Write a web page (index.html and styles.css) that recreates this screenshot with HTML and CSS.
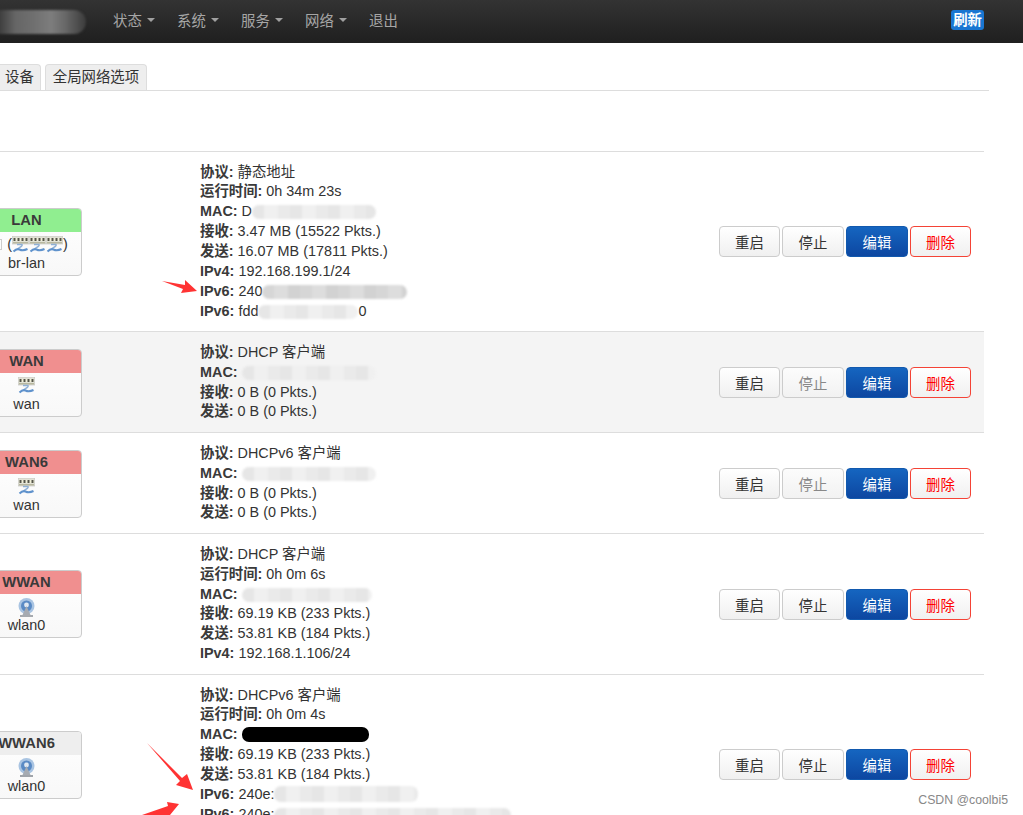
FILE: index.html
```html
<!DOCTYPE html>
<html>
<head>
<meta charset="utf-8">
<title>接口 - LuCI</title>
<link rel="stylesheet" href="styles.css">
</head>
<body>
<svg class="defs">
  <symbol id="port" viewBox="0 0 17 17">
    <rect x="0" y="0" width="17" height="8" fill="#e2e2d6" stroke="#bbb" stroke-width="0.6"/>
    <rect x="1" y="2" width="15" height="3" fill="#f0efd8"/>
    <path d="M2.500 2v3M6.500 2v3M10.500 2v3M14.500 2v3" stroke="#55554a" stroke-width="2"/>
    <rect x="1" y="6" width="15" height="1.500" fill="#b8b8a0"/>
    <path d="M5 8.500h5c1 1.500-2 2.500-4 4" fill="none" stroke="#8fb0d4" stroke-width="1.400"/>
    <path d="M1.500 15.500c2-2 4-3 6-2c2 1 5 1 8-.500" fill="none" stroke="#5f92cc" stroke-width="2"/>
  </symbol>
  <symbol id="wifi" viewBox="0 0 17 19">
    <circle cx="8.500" cy="8" r="8" fill="#a9c4e2"/>
    <circle cx="8.500" cy="8" r="5.500" fill="#5a8ac4"/>
    <circle cx="8.500" cy="7" r="2.400" fill="#dfe8f2"/>
    <path d="M8.500 8L4.500 17h8z" fill="#a6abb2"/>
    <path d="M2 18h13" stroke="#8a8f96" stroke-width="1.600"/>
  </symbol>
</svg>

<div class="navbar">
  <div class="brand"></div>
  <div class="menu">
    <a class="menu-item">状态<i class="caret"></i></a>
    <a class="menu-item">系统<i class="caret"></i></a>
    <a class="menu-item">服务<i class="caret"></i></a>
    <a class="menu-item">网络<i class="caret"></i></a>
    <a class="menu-item">退出</a>
  </div>
  <span class="refresh">刷新</span>
</div>

<div class="tabs">
  <span class="tab tab-first">设备</span>
  <span class="tab">全局网络选项</span>
</div>

<div class="table">

  <div class="row">
    <div class="card-cell">
      <div class="card">
        <div class="card-head green">LAN</div>
        <div class="card-body">
          <div class="icons icons-bridge"><i class="stub"></i>(<svg class="ico"><use href="#port"/></svg><svg class="ico"><use href="#port"/></svg><svg class="ico"><use href="#port"/></svg>)</div>
          <div>br-lan</div>
        </div>
      </div>
    </div>
    <div class="info">
      <div><b>协议:</b> 静态地址</div>
      <div><b>运行时间:</b> 0h 34m 23s</div>
      <div><b>MAC:</b> D<span class="mask mask-lan-mac"></span></div>
      <div><b>接收:</b> 3.47 MB (15522 Pkts.)</div>
      <div><b>发送:</b> 16.07 MB (17811 Pkts.)</div>
      <div><b>IPv4:</b> 192.168.199.1/24</div>
      <div><b>IPv6:</b> 240<span class="mask mask-lan-ip"></span></div>
      <div><b>IPv6:</b> fdd<span class="mask mask-lan-ula"></span>0</div>
    </div>
    <div class="actions">
      <button class="btn">重启</button><button class="btn">停止</button><button class="btn btn-edit">编辑</button><button class="btn btn-del">删除</button>
    </div>
  </div>

  <div class="row shaded">
    <div class="card-cell">
      <div class="card">
        <div class="card-head red">WAN</div>
        <div class="card-body">
          <div class="icons"><svg class="ico"><use href="#port"/></svg></div>
          <div>wan</div>
        </div>
      </div>
    </div>
    <div class="info">
      <div><b>协议:</b> DHCP 客户端</div>
      <div><b>MAC:</b> <span class="mask mask-wan"></span></div>
      <div><b>接收:</b> 0 B (0 Pkts.)</div>
      <div><b>发送:</b> 0 B (0 Pkts.)</div>
    </div>
    <div class="actions">
      <button class="btn">重启</button><button class="btn btn-off">停止</button><button class="btn btn-edit">编辑</button><button class="btn btn-del">删除</button>
    </div>
  </div>

  <div class="row">
    <div class="card-cell">
      <div class="card">
        <div class="card-head red">WAN6</div>
        <div class="card-body">
          <div class="icons"><svg class="ico"><use href="#port"/></svg></div>
          <div>wan</div>
        </div>
      </div>
    </div>
    <div class="info">
      <div><b>协议:</b> DHCPv6 客户端</div>
      <div><b>MAC:</b> <span class="mask mask-wan"></span></div>
      <div><b>接收:</b> 0 B (0 Pkts.)</div>
      <div><b>发送:</b> 0 B (0 Pkts.)</div>
    </div>
    <div class="actions">
      <button class="btn">重启</button><button class="btn btn-off">停止</button><button class="btn btn-edit">编辑</button><button class="btn btn-del">删除</button>
    </div>
  </div>

  <div class="row">
    <div class="card-cell">
      <div class="card">
        <div class="card-head red">WWAN</div>
        <div class="card-body">
          <div class="icons"><svg class="ico ico-wifi"><use href="#wifi"/></svg></div>
          <div>wlan0</div>
        </div>
      </div>
    </div>
    <div class="info">
      <div><b>协议:</b> DHCP 客户端</div>
      <div><b>运行时间:</b> 0h 0m 6s</div>
      <div><b>MAC:</b> <span class="mask mask-wwan"></span></div>
      <div><b>接收:</b> 69.19 KB (233 Pkts.)</div>
      <div><b>发送:</b> 53.81 KB (184 Pkts.)</div>
      <div><b>IPv4:</b> 192.168.1.106/24</div>
    </div>
    <div class="actions">
      <button class="btn">重启</button><button class="btn">停止</button><button class="btn btn-edit">编辑</button><button class="btn btn-del">删除</button>
    </div>
  </div>

  <div class="row">
    <div class="card-cell">
      <div class="card">
        <div class="card-head grey">WWAN6</div>
        <div class="card-body">
          <div class="icons"><svg class="ico ico-wifi"><use href="#wifi"/></svg></div>
          <div>wlan0</div>
        </div>
      </div>
    </div>
    <div class="info">
      <div><b>协议:</b> DHCPv6 客户端</div>
      <div><b>运行时间:</b> 0h 0m 4s</div>
      <div><b>MAC:</b> <span class="mask mask-black"></span></div>
      <div><b>接收:</b> 69.19 KB (233 Pkts.)</div>
      <div><b>发送:</b> 53.81 KB (184 Pkts.)</div>
      <div><b>IPv6:</b> 240e:<span class="mask mask-wwan-ip"></span></div>
      <div><b>IPv6:</b> 240e:<span class="mask mask-wwan-ip2"></span></div>
      <div>&nbsp;</div>
    </div>
    <div class="actions">
      <button class="btn">重启</button><button class="btn">停止</button><button class="btn btn-edit">编辑</button><button class="btn btn-del">删除</button>
    </div>
  </div>

</div>

<!-- red arrows pasted on top of the screenshot -->
<svg class="arrows" viewBox="0 0 1023 815">
  <polygon points="162,281 185,285 185,280 197,291 181,293 183,289"/>
  <polygon points="147,743 182,778 187,774 193,790 176,785 180,781"/>
  <polygon points="142,815 168,806 167,802 179,804 170,815"/>
</svg>

<div class="watermark">CSDN @coolbi5</div>
</body>
</html>
```

FILE: styles.css
```css
html, body {
  height: 815px;
  overflow: hidden;
}
body {
  position: relative;
  margin: 0;
  background: #fff;
  color: #333;
  font-family: "Liberation Sans", "Noto Sans CJK SC", sans-serif;
  font-size: 14.4px;
}
.defs {
  display: none;
}

.navbar {
  display: flex;
  align-items: center;
  height: 43px;
  box-sizing: border-box;
  padding-right: 39px;
  padding-bottom: 4px;
  background: linear-gradient(#333, #1f1f1f);
}
.brand {
  width: 88px;
  height: 24px;
  margin-top: 4px;
  margin-left: -2px;
  border-radius: 0 12px 12px 0;
  background: linear-gradient(90deg, #3a3a3a, #666 20%, #6f6f6f 40%, #7d7d7d 60%, #6a6a6a 75%, #3c3c3c);
  filter: blur(1px);
}
.menu {
  display: flex;
  margin-left: 27px;
  flex: 1;
}
.menu-item {
  display: flex;
  align-items: center;
  width: 64px;
  color: #a6a6a6;
}
.caret {
  width: 0;
  height: 0;
  margin-left: 5px;
  border-top: 4px solid #a0a0a0;
  border-left: 4px solid transparent;
  border-right: 4px solid transparent;
}
.refresh {
  padding: 0 2px;
  height: 20px;
  line-height: 20px;
  border-radius: 3px;
  background: #1976d2;
  color: #fff;
  font-weight: bold;
}

.tabs {
  display: flex;
  gap: 4px;
  width: 989px;
  height: 26px;
  margin-top: 21px;
  border-bottom: 1px solid #ddd;
}
.tab {
  height: 26px;
  padding: 0 7px;
  line-height: 25px;
  border: 1px solid #ddd;
  border-bottom: 0;
  border-radius: 4px 4px 0 0;
  background: #eee;
  box-sizing: border-box;
}
.tab-first {
  margin-left: -7px;
  padding-left: 11px;
  padding-right: 6px;
}

.table {
  width: 984px;
  margin-top: 60px;
}
.row {
  display: grid;
  grid-template-columns: 200px 1fr auto;
  align-items: center;
  padding: 10.600px 13px 10px 0;
  border-top: 1px solid #ddd;
}
.shaded {
  background: #f4f4f4;
}

.card {
  width: 111px;
  margin-left: -29px;
  box-sizing: border-box;
  border: 1px solid #ccc;
  border-radius: 4px;
  background: linear-gradient(#fff, #f8f8f8);
  text-align: center;
  overflow: hidden;
}
.card-head {
  height: 23px;
  line-height: 23px;
  font-weight: bold;
  font-size: 14.800px;
  color: #3a3a3a;
}
.green {
  background: #90ee90;
}
.red {
  background: #f08f8f;
}
.grey {
  background: #eee;
}
.card-body {
  height: 43px;
  padding-top: 3px;
  line-height: 15px;
  box-sizing: border-box;
}
.icons {
  display: flex;
  justify-content: center;
  align-items: center;
  position: relative;
  height: 20px;
  margin-bottom: 1px;
}
.icons-bridge {
  padding-left: 22px;
}
.ico {
  width: 17px;
  height: 17px;
}
.ico-wifi {
  height: 19px;
}
.stub {
  position: absolute;
  left: 20px;
  top: 4px;
  width: 8px;
  height: 9px;
  border: 1px solid #ccc;
}

.info {
  line-height: 19.850px;
  white-space: nowrap;
}
.info b {
  color: #3a3a3a;
}

.mask {
  display: inline-block;
  height: 14px;
  vertical-align: -3px;
  border-radius: 7px;
  filter: blur(1px);
  background: repeating-linear-gradient(90deg, #e6e6e6 0 12px, #f0f0f0 12px 26px, #eaeaea 26px 38px);
}
.mask-lan-mac {
  width: 124px;
}
.mask-lan-ip {
  width: 145px;
  background: repeating-linear-gradient(90deg, #d6d6d6 0 12px, #ddd 12px 26px, #d2d2d2 26px 38px);
}
.mask-lan-ula {
  width: 100px;
}
.mask-wan {
  width: 134px;
}
.mask-wwan {
  width: 130px;
}
.mask-black {
  width: 127px;
  height: 15px;
  background: #000;
  filter: none;
}
.mask-wwan-ip {
  width: 144px;
  height: 16px;
}
.mask-wwan-ip2 {
  width: 237px;
}

.actions {
  display: flex;
  gap: 2px;
}
.btn {
  width: 62px;
  height: 31px;
  padding: 0;
  border: 1px solid #ccc;
  border-radius: 4px;
  background: linear-gradient(#fff, #f0f0f0);
  color: #333;
  font-family: inherit;
  font-size: 14.400px;
}
.btn:first-child, .btn-del {
  width: 61px;
}
.btn-off {
  color: #888;
  background: linear-gradient(#fcfcfc, #f2f2f2);
}
.btn-edit {
  border-color: #1259ae;
  background: linear-gradient(#1565c0, #0d47a1);
  color: #fff;
}
.btn-del {
  border-color: #f44336;
  color: #f00;
}

.arrows {
  position: absolute;
  left: 0;
  top: 0;
  width: 1023px;
  height: 815px;
  fill: #f33;
}
.watermark {
  position: absolute;
  right: 15px;
  top: 793px;
  color: #888;
  font-size: 12.300px;
  text-shadow: 0 0 2px #fff;
}
```
